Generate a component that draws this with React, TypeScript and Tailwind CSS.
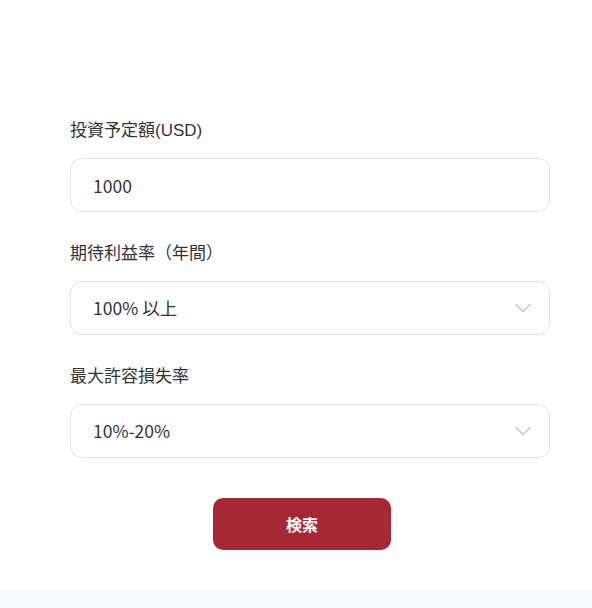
import { useState } from 'react'

const Chevron = () => (
  <svg
    width="16"
    height="10"
    viewBox="0 0 16 10"
    fill="none"
    className="pointer-events-none absolute right-[19px] top-1/2 -translate-y-1/2"
  >
    <path d="M1 1.5l7 7 7-7" stroke="#c4c4c4" strokeWidth="1.4" strokeLinecap="round" strokeLinejoin="round" />
  </svg>
)

const App = () => {
  const [monto, setMonto] = useState('1000')
  const [retorno, setRetorno] = useState('100% 以上')
  const [perdida, setPerdida] = useState('10%-20%')

  const etiqueta = "text-[17px] leading-[26px] text-[#333] font-['Liberation_Sans','Noto_Sans_CJK_JP',sans-serif]"
  const campo =
    "w-full h-[54px] rounded-[12px] border border-[#e2e2e2] bg-white pl-[22px] pr-12 text-[17.5px] text-[#333] outline-none appearance-none font-['Noto_Sans_CJK_JP',sans-serif]"

  return (
    <div className="min-h-[608px] flex flex-col bg-[#f9fafb] font-['Noto_Sans_CJK_JP','Noto_Sans',sans-serif]">
      <div className="bg-white pl-[70px] pr-[42px] pt-[118px] pb-[40px] flex flex-col">
        <label className={`${etiqueta} mb-[14px]`}>投資予定額(USD)</label>
        <input value={monto} onChange={(e) => setMonto(e.target.value)} className={campo} />

        <label className={`${etiqueta} mt-[29px] mb-[14px]`}>期待利益率（年間）</label>
        <div className="relative">
          <select value={retorno} onChange={(e) => setRetorno(e.target.value)} className={campo}>
            <option>100% 以上</option>
            <option>50%-100%</option>
            <option>20%-50%</option>
          </select>
          <Chevron />
        </div>

        <label className={`${etiqueta} mt-[29px] mb-[14px]`}>最大許容損失率</label>
        <div className="relative">
          <select value={perdida} onChange={(e) => setPerdida(e.target.value)} className={campo}>
            <option>10%-20%</option>
            <option>20%-30%</option>
            <option>30% 以上</option>
          </select>
          <Chevron />
        </div>

        <button className="mt-[40px] self-start ml-[143px] w-[178px] h-[52px] rounded-[10px] bg-[#a62834] text-white text-[16px] font-bold">
          検索
        </button>
      </div>
    </div>
  )
}

export default App
